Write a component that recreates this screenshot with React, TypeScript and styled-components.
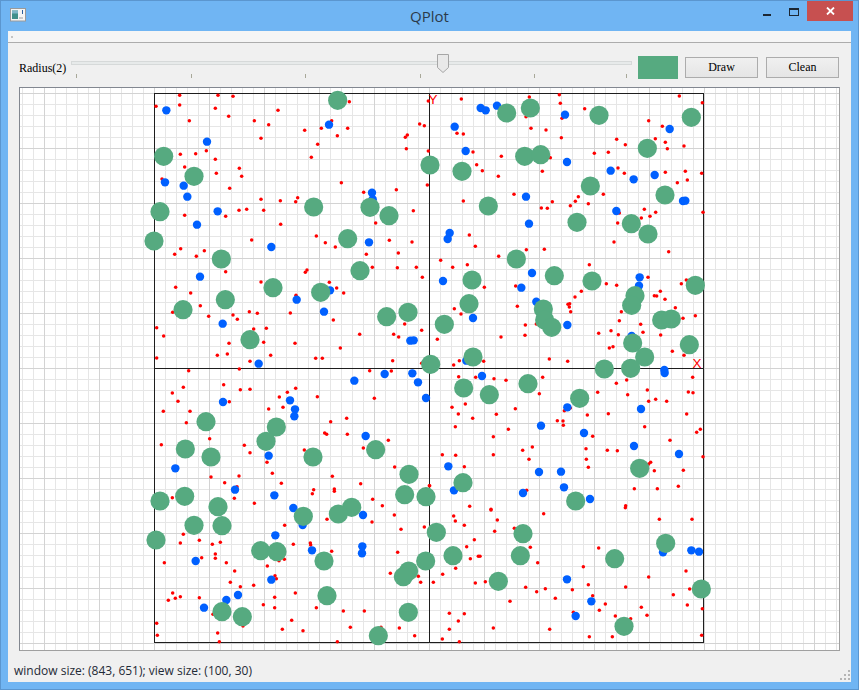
import React from 'react';
import styled, { createGlobalStyle } from 'styled-components';

type Pt = [number, number];
type Tile = {
  x: number;
  y: number;
  green: Pt[];
  blue: Pt[];
  red: Pt[];
};

// points read off 3x crops, so every tile is in crop coordinates
const tiles: Tile[] = [
  {
    x: 155,
    y: 90,
    green: [[548, 31], [26, 199], [117, 259], [15, 365], [476, 351], [645, 352], [702, 377], [825, 225]],
    blue: [[34, 61], [156, 155], [522, 104], [30, 277], [86, 287], [97, 320], [651, 308], [653, 328], [188, 364], [126, 404]],
    red: [[74, 16], [189, 16], [234, 19], [3, 49], [74, 45], [181, 55], [221, 79], [103, 92], [369, 61], [298, 92], [341, 104], [583, 35], [530, 92], [449, 121], [499, 115], [578, 115], [547, 137], [318, 145], [488, 163], [794, 102], [808, 107], [757, 135], [751, 142], [754, 176], [820, 183], [820, 33], [76, 193], [122, 191], [154, 182], [181, 208], [469, 202], [89, 231], [253, 235], [184, 250], [260, 259], [21, 267], [224, 295], [559, 278], [817, 285], [626, 307], [724, 299], [318, 328], [376, 332], [428, 323], [422, 335], [775, 362], [252, 361], [275, 358], [326, 361], [212, 379], [89, 376], [377, 403], [662, 399]],
  },
  {
    x: 429,
    y: 90,
    green: [[233, 69], [304, 54], [510, 76], [787, 82], [655, 175], [287, 199], [335, 194], [99, 244], [484, 288], [708, 315], [178, 348], [444, 397], [607, 401]],
    blue: [[155, 54], [170, 61], [204, 47], [408, 74], [77, 110], [722, 117], [110, 183], [414, 216], [545, 242], [614, 268], [677, 255], [291, 320], [562, 363], [300, 401], [762, 333], [769, 332]],
    red: [[97, 27], [301, 21], [391, 14], [751, 18], [394, 40], [820, 38], [467, 56], [291, 80], [399, 85], [659, 92], [700, 109], [306, 115], [351, 120], [84, 130], [103, 132], [397, 143], [563, 148], [679, 146], [589, 164], [709, 157], [765, 168], [715, 176], [132, 186], [496, 190], [538, 187], [217, 199], [364, 203], [143, 224], [567, 234], [160, 242], [340, 244], [586, 250], [709, 247], [769, 244], [818, 250], [208, 259], [775, 270], [745, 278], [255, 313], [523, 313], [448, 320], [103, 333], [439, 334], [370, 335], [424, 347], [478, 341], [337, 354], [355, 355], [646, 358], [680, 367], [663, 379], [637, 384], [571, 369], [566, 399], [822, 367]],
  },
  {
    x: 155,
    y: 230,
    green: [[-3, 33], [199, 87], [354, 173], [211, 209], [84, 239], [578, 26], [615, 122], [497, 187], [285, 329], [695, 260], [759, 247]],
    blue: [[349, 51], [642, 37], [135, 140], [203, 281], [425, 209], [525, 181], [507, 245], [311, 401], [766, 332], [776, 331]],
    red: [[290, 30], [484, 18], [511, 38], [541, 51], [703, 31], [771, 36], [77, 56], [59, 73], [124, 79], [148, 62], [634, 73], [730, 69], [652, 112], [727, 113], [784, 112], [212, 125], [456, 120], [451, 127], [802, 142], [318, 156], [523, 157], [62, 172], [107, 189], [545, 174], [566, 189], [136, 227], [423, 196], [53, 247], [161, 259], [234, 255], [247, 268], [283, 245], [307, 250], [406, 249], [535, 270], [5, 293], [296, 297], [334, 295], [749, 282], [800, 301], [26, 318], [222, 340], [326, 337], [420, 340], [614, 313], [716, 313], [731, 321], [556, 354], [187, 376], [217, 372], [347, 376], [5, 384], [482, 385], [502, 385], [285, 394], [713, 392], [800, 400], [253, 417]],
  },
  {
    x: 429,
    y: 230,
    green: [[657, 12], [262, 87], [376, 137], [129, 150], [120, 221], [489, 153], [618, 197], [608, 226], [343, 237], [347, 270], [368, 292], [46, 283], [698, 270], [727, 267], [799, 166], [781, 344], [611, 339], [647, 381], [132, 381], [5, 403], [526, 417], [605, 415]],
    blue: [[62, 9], [56, 27], [309, 129], [42, 153], [277, 173], [632, 142], [630, 167], [322, 215], [132, 264], [415, 285], [608, 318], [112, 392], [706, 420]],
    red: [[121, 15], [555, 36], [139, 49], [292, 59], [346, 58], [719, 65], [209, 79], [35, 91], [115, 104], [71, 112], [481, 104], [657, 142], [532, 161], [563, 166], [757, 161], [772, 150], [166, 172], [260, 168], [457, 184], [676, 197], [683, 198], [694, 184], [438, 201], [708, 208], [422, 221], [417, 223], [421, 231], [265, 229], [739, 233], [76, 236], [96, 252], [425, 245], [577, 245], [799, 257], [762, 265], [571, 272], [289, 285], [635, 283], [322, 282], [546, 302], [642, 307], [509, 310], [568, 314], [288, 316], [695, 315], [216, 321], [25, 328], [552, 350], [541, 354], [730, 364], [765, 376], [361, 387], [416, 394], [91, 392], [74, 405], [164, 394]],
  },
  {
    x: 155,
    y: 370,
    green: [[153, 155], [364, 171], [333, 214], [91, 237], [168, 261], [474, 261], [662, 239], [762, 313], [749, 374], [813, 380], [89, 379], [15, 393], [189, 410], [590, 412]],
    blue: [[30, 397], [598, 32], [689, 12], [772, 10], [789, 37], [813, 84], [204, 96], [405, 91], [420, 118], [418, 139], [632, 198], [341, 257], [61, 295], [240, 359], [358, 376], [415, 414]],
    red: [[101, 2], [644, 2], [709, 3], [206, 44], [85, 52], [52, 69], [256, 59], [285, 58], [397, 67], [422, 55], [373, 81], [487, 80], [69, 94], [223, 95], [658, 85], [25, 124], [105, 124], [341, 117], [384, 112], [94, 158], [527, 155], [575, 145], [509, 189], [515, 193], [577, 193], [164, 206], [19, 224], [700, 211], [268, 226], [625, 234], [448, 240], [285, 248], [336, 277], [168, 321], [252, 318], [352, 310], [532, 319], [719, 291], [209, 338], [379, 340], [617, 341], [246, 350], [476, 359], [472, 371], [538, 357], [538, 364], [653, 388], [238, 385], [52, 383], [298, 400], [682, 407], [823, 347]],
  },
  {
    x: 429,
    y: 370,
    green: [[104, 54], [181, 74], [297, 41], [452, 85], [632, 295], [102, 338], [440, 393]],
    blue: [[159, 18], [707, 9], [415, 112], [636, 117], [336, 167], [465, 189], [615, 228], [750, 252], [58, 289], [330, 306], [396, 305], [405, 352], [75, 361], [282, 369], [483, 387]],
    red: [[89, 20], [140, 22], [195, 26], [231, 31], [341, 22], [791, 22], [593, 30], [562, 40], [506, 67], [331, 71], [655, 60], [596, 74], [778, 66], [792, 68], [659, 94], [680, 88], [713, 94], [69, 112], [109, 102], [259, 116], [406, 122], [424, 114], [88, 132], [202, 133], [131, 145], [475, 135], [538, 131], [773, 132], [385, 152], [402, 153], [403, 166], [79, 170], [238, 178], [647, 170], [814, 178], [803, 187], [193, 200], [491, 199], [723, 211], [40, 254], [80, 256], [193, 254], [281, 241], [310, 231], [471, 236], [535, 241], [565, 242], [822, 260], [300, 268], [472, 268], [106, 290], [478, 292], [665, 277], [659, 282], [676, 302], [763, 301], [2, 347], [293, 361], [616, 356], [685, 356], [748, 349], [122, 409], [186, 418], [590, 407], [589, 413]],
  },
  {
    x: 155,
    y: 510,
    green: [[117, 46], [201, 47], [445, 19], [550, 12], [3, 90], [317, 122], [366, 125], [507, 153], [761, 183], [745, 200], [812, 153], [516, 257], [201, 305], [262, 320], [760, 307], [670, 377]],
    blue: [[624, 15], [443, 45], [361, 76], [622, 109], [621, 130], [471, 121], [122, 153], [349, 209], [249, 255], [214, 270], [147, 293]],
    red: [[718, 15], [516, 28], [389, 46], [651, 36], [738, 58], [808, 51], [85, 73], [76, 99], [133, 91], [172, 103], [196, 97], [415, 103], [466, 99], [467, 105], [530, 124], [181, 132], [181, 145], [140, 143], [28, 158], [214, 158], [728, 127], [388, 148], [372, 152], [337, 168], [239, 183], [706, 190], [790, 199], [360, 197], [364, 206], [797, 217], [226, 217], [256, 230], [296, 226], [53, 249], [40, 271], [61, 265], [76, 260], [133, 263], [421, 249], [359, 262], [325, 284], [359, 293], [484, 293], [565, 303], [628, 303], [174, 313], [410, 331], [5, 340], [7, 376], [382, 358], [444, 362], [586, 352], [733, 354], [678, 352], [779, 377], [188, 369], [193, 395], [547, 395], [264, 348]],
  },
  {
    x: 429,
    y: 510,
    green: [[22, 67], [282, 71], [710, 100], [72, 137], [274, 137], [557, 146], [208, 214], [817, 237], [585, 349]],
    blue: [[702, 127], [787, 121], [810, 125], [414, 208], [487, 274], [440, 318]],
    red: [[186, 0], [344, 11], [74, 18], [79, 33], [205, 30], [691, 28], [789, 28], [106, 46], [197, 64], [256, 55], [136, 89], [113, 110], [304, 112], [509, 114], [124, 146], [148, 139], [153, 139], [80, 175], [326, 158], [463, 170], [771, 183], [41, 193], [659, 201], [13, 217], [139, 219], [169, 215], [478, 224], [590, 231], [290, 232], [349, 236], [323, 245], [430, 239], [782, 237], [733, 254], [379, 265], [243, 274], [491, 257], [529, 282], [775, 285], [637, 292], [820, 296], [511, 301], [61, 310], [106, 311], [433, 307], [559, 318], [654, 316], [605, 326], [88, 333], [61, 358], [193, 354], [362, 358], [40, 387], [481, 380], [550, 380], [818, 376], [91, 395]],
  },
];

const GREEN = '#56aa80';
const BLUE = '#0060ff';

// canvas panel starts at (19, 87) on the page
const PANEL_X = 20;
const PANEL_Y = 88;
const PANEL_W = 819;
const PANEL_H = 562;

const place = (key: 'green' | 'blue' | 'red') =>
  tiles.flatMap((t) =>
    t[key].map(([zx, zy]) => ({
      cx: t.x + zx / 3 - PANEL_X,
      cy: t.y + zy / 3 - PANEL_Y,
    })),
  );

const gridLines = (size: number, origin: number, offset: number) => {
  const minor: number[] = [];
  const major: number[] = [];
  for (let k = -60; k <= 60; k++) {
    const p = origin + k * 11 - offset + 0.5;
    if (p < 0 || p > size) continue;
    (k % 5 === 0 ? major : minor).push(p);
  }
  return { minor, major };
};

const Plot = () => {
  const vertical = gridLines(PANEL_W, 429, PANEL_X);
  const horizontal = gridLines(PANEL_H, 368, PANEL_Y);
  const left = 154.5 - PANEL_X;
  const right = 703.5 - PANEL_X;
  const top = 93.5 - PANEL_Y;
  const bottom = 642.5 - PANEL_Y;
  const midX = 429.5 - PANEL_X;
  const midY = 368.5 - PANEL_Y;

  return (
    <PlotSvg width={PANEL_W} height={PANEL_H} viewBox={`0 0 ${PANEL_W} ${PANEL_H}`}>
      <g stroke="#e6e6e6" strokeWidth="1">
        {vertical.minor.map((x) => (
          <line key={x} x1={x} x2={x} y1={0} y2={PANEL_H} />
        ))}
        {horizontal.minor.map((y) => (
          <line key={y} x1={0} x2={PANEL_W} y1={y} y2={y} />
        ))}
      </g>
      <g stroke="#d3d3d3" strokeWidth="1">
        {vertical.major.map((x) => (
          <line key={x} x1={x} x2={x} y1={0} y2={PANEL_H} />
        ))}
        {horizontal.major.map((y) => (
          <line key={y} x1={0} x2={PANEL_W} y1={y} y2={y} />
        ))}
      </g>
      <g stroke="#1e1e1e" strokeWidth="1" fill="none">
        <rect x={left} y={top} width={right - left} height={bottom - top} />
        <line x1={midX} x2={midX} y1={top} y2={bottom} />
        <line x1={left} x2={right} y1={midY} y2={midY} />
      </g>
      <g fill="#ff0000">
        {place('red').map((p, i) => (
          <circle key={i} cx={p.cx} cy={p.cy} r={1.75} />
        ))}
      </g>
      <g fill={BLUE}>
        {place('blue').map((p, i) => (
          <circle key={i} cx={p.cx} cy={p.cy} r={4.2} />
        ))}
      </g>
      <AxisLabel x={428.5 - PANEL_X} y={104 - PANEL_Y}>
        Y
      </AxisLabel>
      <AxisLabel x={692.5 - PANEL_X} y={368 - PANEL_Y}>
        X
      </AxisLabel>
      <g fill={GREEN}>
        {place('green').map((p, i) => (
          <circle key={i} cx={p.cx} cy={p.cy} r={9.6} />
        ))}
      </g>
    </PlotSvg>
  );
};

const ticks = [0, 115, 114, 115, 114, 92];

export default function App() {
  return (
    <React.Fragment>
      <GlobalStyle />
      <Window>
        <TitleBar>
          <AppIcon viewBox="0 0 16 14" width="16" height="14">
            <rect x="0.5" y="0.5" width="15" height="12.5" fill="#f4f4f4" stroke="#9a9a9a" />
            <rect x="2" y="2.5" width="6" height="8.5" fill="#3f8f8a" />
            <rect x="2" y="2.5" width="6" height="3" fill="#7fb6c8" />
            <rect x="12" y="2" width="1" height="4" fill="#2a5f9e" />
            <rect x="9" y="9" width="4" height="2" fill="#c9c9c9" />
          </AppIcon>
          <Title>QPlot</Title>
          <WindowButtons>
            <MinButton>
              <svg width="8" height="2" viewBox="0 0 8 2">
                <rect width="8" height="2" fill="#1c2733" />
              </svg>
            </MinButton>
            <MaxButton>
              <svg width="10" height="8" viewBox="0 0 10 8">
                <rect x="0.5" y="0.5" width="9" height="7" fill="none" stroke="#1c2733" />
                <rect x="0" y="0" width="10" height="2" fill="#1c2733" />
              </svg>
            </MaxButton>
            <CloseButton>
              <svg width="9" height="8" viewBox="0 0 9 8">
                <path d="M1 0.5 L8 7.5 M8 0.5 L1 7.5" stroke="#ffffff" strokeWidth="1.8" />
              </svg>
            </CloseButton>
          </WindowButtons>
        </TitleBar>
        <Client>
          <MenuBar>
            <MenuGrip />
          </MenuBar>
          <Toolbar>
            <RadiusLabel>Radius(2)</RadiusLabel>
            <Slider>
              <Groove />
              <Handle width="12" height="19" viewBox="0 0 12 19">
                <path
                  d="M0.5 0.5 H11.5 V13.5 L6 18.5 L0.5 13.5 Z"
                  fill="#e9e9e9"
                  stroke="#a6a6a6"
                />
              </Handle>
              <Ticks>
                {ticks.map((gap, i) => (
                  <Tick key={i} $gap={gap} />
                ))}
              </Ticks>
            </Slider>
            <Swatch />
            <PushButton>Draw</PushButton>
            <PushButton>Clean</PushButton>
          </Toolbar>
          <Panel>
            <Plot />
          </Panel>
          <StatusBar>
            <span>window size: (843, 651); view size: (100, 30)</span>
            <SizeGrip width="11" height="11" viewBox="0 0 11 11">
              <g fill="#b5b5b5">
                <rect x="8" y="0" width="2" height="2" />
                <rect x="4" y="4" width="2" height="2" />
                <rect x="8" y="4" width="2" height="2" />
                <rect x="0" y="8" width="2" height="2" />
                <rect x="4" y="8" width="2" height="2" />
                <rect x="8" y="8" width="2" height="2" />
              </g>
            </SizeGrip>
          </StatusBar>
        </Client>
      </Window>
    </React.Fragment>
  );
}

const GlobalStyle = createGlobalStyle`
  html, body {
    margin: 0;
    padding: 0;
    background: #70b5f3;
  }
`;

const Window = styled.div`
  box-sizing: border-box;
  width: 859px;
  height: 690px;
  display: flex;
  flex-direction: column;
  background: #70b5f3;
  border: 1px solid #5b96cf;
  overflow: hidden;
`;

const TitleBar = styled.div`
  position: relative;
  height: 30px;
  flex: none;
  display: flex;
  align-items: flex-start;
  justify-content: center;
`;

const AppIcon = styled.svg`
  position: absolute;
  left: 9px;
  top: 7px;
`;

const Title = styled.div`
  margin-top: 5px;
  font-family: 'Open Sans', 'Noto Sans', sans-serif;
  font-size: 15px;
  line-height: 20px;
  color: #2b3a4a;
`;

const WindowButtons = styled.div`
  position: absolute;
  right: 5px;
  top: 0;
  display: flex;
  height: 20px;
`;

const CaptionButton = styled.div`
  display: flex;
  align-items: center;
  justify-content: center;
`;

const MinButton = styled(CaptionButton)`
  width: 26px;
  padding-top: 7px;
  box-sizing: border-box;
`;

const MaxButton = styled(CaptionButton)`
  width: 27px;
  padding-top: 2px;
  box-sizing: border-box;
`;

const CloseButton = styled(CaptionButton)`
  width: 46px;
  background: #c75050;
`;

const Client = styled.div`
  flex: 1;
  min-height: 0;
  margin: 0 7px 7px;
  display: flex;
  flex-direction: column;
  background: #f0f0f0;
`;

const MenuBar = styled.div`
  flex: none;
  height: 11px;
  background: #f5f5f5;
  border-bottom: 1px solid #acacac;
  display: flex;
  align-items: center;
  padding-left: 3px;
`;

const MenuGrip = styled.div`
  width: 2px;
  height: 2px;
  background: #c4c4c4;
`;

const Toolbar = styled.div`
  flex: none;
  height: 44px;
  display: flex;
  align-items: flex-start;
  padding-left: 11px;
`;

const RadiusLabel = styled.div`
  width: 52px;
  flex: none;
  margin-top: 17px;
  font-family: 'Liberation Serif', serif;
  font-size: 12px;
  line-height: 16px;
  color: #000000;
`;

const Slider = styled.div`
  position: relative;
  width: 561px;
  flex: none;
  padding-top: 18px;
`;

const Groove = styled.div`
  box-sizing: border-box;
  height: 4px;
  background: #e7eaea;
  border: 1px solid #d6d9d9;
`;

const Handle = styled.svg`
  position: absolute;
  left: 366px;
  top: 11px;
`;

const Ticks = styled.div`
  display: flex;
  margin-top: 9px;
  padding-left: 5px;
`;

const Tick = styled.div<{ $gap: number }>`
  width: 1px;
  height: 4px;
  flex: none;
  background: #a8a899;
  margin-left: ${({ $gap }) => ($gap ? $gap - 1 : 0)}px;
`;

const Swatch = styled.div`
  width: 40px;
  height: 23px;
  flex: none;
  margin: 13px 0 0 6px;
  background: ${GREEN};
`;

const PushButton = styled.div`
  box-sizing: border-box;
  width: 73px;
  height: 21px;
  flex: none;
  margin: 14px 0 0 7px;
  display: flex;
  align-items: center;
  justify-content: center;
  border: 1px solid #acacac;
  background: linear-gradient(#f0f0f0, #e5e5e5);
  font-family: 'Liberation Serif', serif;
  font-size: 12px;
  color: #000000;

  & + & {
    margin-left: 8px;
  }
`;

const Panel = styled.div`
  flex: none;
  box-sizing: border-box;
  width: 821px;
  height: 564px;
  margin-left: 11px;
  background: #ffffff;
  border: 1px solid #a0a0a0;
  border-top-color: #828790;
  border-left-color: #828790;
  overflow: hidden;
`;

const PlotSvg = styled.svg`
  display: block;
`;

const AxisLabel = styled.text`
  font-family: 'Liberation Sans', sans-serif;
  font-size: 13.5px;
  fill: #ff0000;
`;

const StatusBar = styled.div`
  flex: 1;
  position: relative;
  display: flex;
  align-items: center;
  padding: 7px 0 0 6px;
  font-family: 'Open Sans', 'Noto Sans', sans-serif;
  font-size: 12px;
  color: #1f2a36;
`;

const SizeGrip = styled.svg`
  position: absolute;
  right: 0;
  bottom: 1px;
`;
